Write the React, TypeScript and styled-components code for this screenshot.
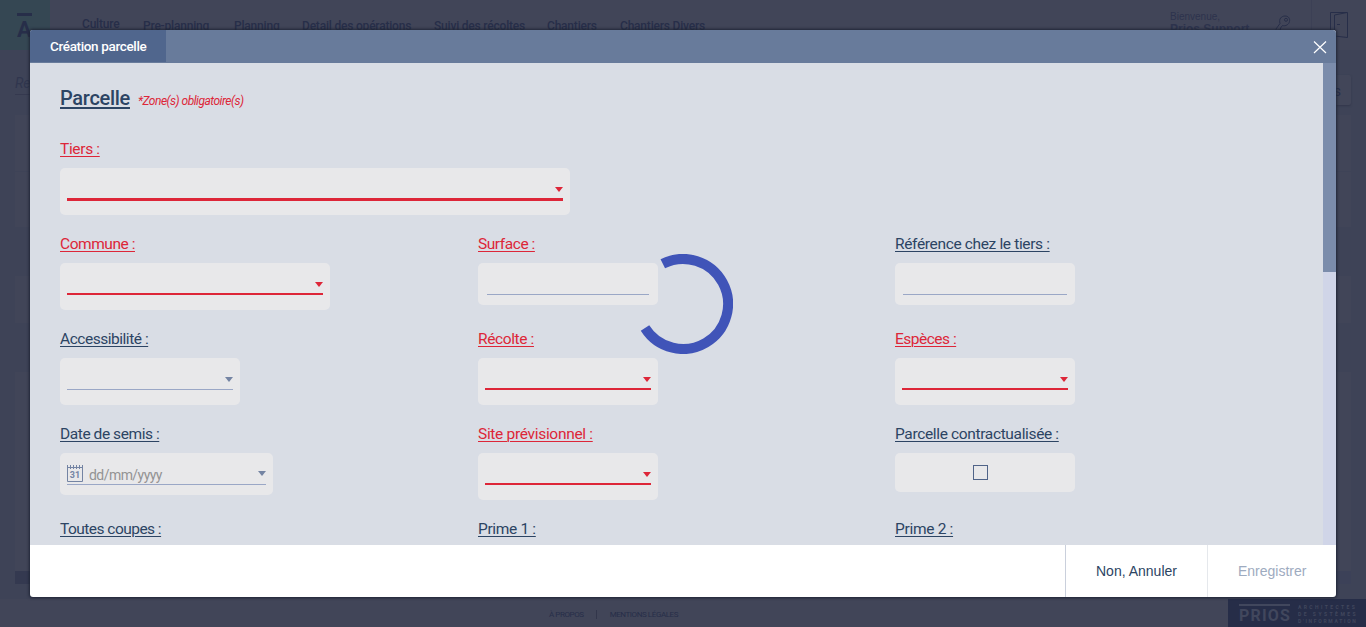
import React from 'react';
import styled, { createGlobalStyle } from 'styled-components';

const NAVY = '#2c4463';
const RED = '#dd2638';
const SLATE = '#7484a3';
const din = "Roboto, 'Liberation Sans', sans-serif";

const GlobalStyle = createGlobalStyle`
  * { box-sizing: border-box; }
  body { margin: 0; background: #3e4357; overflow: hidden; }
`;

const Page = styled.div`
  position: relative;
  width: 1366px;
  height: 627px;
  display: flex;
  flex-direction: column;
  background: #3e4357;
  font-family: ${din};
  color: #272e49;
`;

const TopBar = styled.header`
  display: flex;
  height: 50px;
  background: #414558;
`;
const Brand = styled.div`
  width: 50px;
  height: 50px;
  background: #354753;
  padding: 13px 0 0 17px;
`;
const Nav = styled.nav`
  flex: 1;
  display: flex;
  padding: 15px 0 0 32px;
`;
const NavItem = styled.span<{ $w: number; $active?: boolean }>`
  width: ${p => p.$w}px;
  flex: none;
  white-space: nowrap;
  font-size: 12px;
  font-weight: 500;
  line-height: 18px;
  letter-spacing: -0.2px;
  margin-top: ${p => (p.$active ? 0 : 2)}px;
`;
const Welcome = styled.div`
  width: 105px;
  padding-top: 10px;
  font: 10px/13px 'Liberation Sans', sans-serif;
  color: #2d334d;
  strong { display: block; font-size: 12px; }
`;
const KeySlot = styled.div`
  width: 36px;
  padding-top: 15px;
`;
const Exit = styled.div`
  width: 55px;
  border-left: 1px solid #3c4055;
  padding: 12px 0 0 18px;
`;

const Workspace = styled.main`
  flex: 1;
  position: relative;
  padding: 24px 15px 0;
  display: flex;
  flex-direction: column;
`;
const SearchLine = styled.div`
  display: flex;
  justify-content: space-between;
  height: 41px;
`;
const SearchHint = styled.div`
  width: 120px;
  height: 21px;
  border-bottom: 1px solid #35394f;
  font-size: 14px;
  line-height: 19px;
  font-style: italic;
  color: #30364e;
`;
const GhostButton = styled.div`
  width: 80px;
  height: 30px;
  margin-top: 1px;
  padding-right: 10px;
  border-radius: 2px;
  background: #424659;
  box-shadow: 0 1px 2px #33374b;
  text-align: right;
  font-size: 14px;
  line-height: 32px;
`;
const Panel = styled.div<{ $h: number; $gap: number; $fill?: string }>`
  height: ${p => p.$h}px;
  margin-bottom: ${p => p.$gap}px;
  background: ${p => p.$fill ?? '#414558'};
`;
const PagerStrip = styled.div`
  height: 13px;
  background: linear-gradient(90deg, #343950 50%, #3c4158 50%);
`;

const BottomBar = styled.footer`
  height: 28px;
  display: flex;
  background: #414558;
`;
const Legal = styled.div`
  flex: 1;
  display: flex;
  padding-left: 549px;
  align-items: center;
  font-size: 8px;
  letter-spacing: -0.42px;
  padding-top: 2px;
  span + span { margin-left: 12px; padding-left: 13px; border-left: 1px solid #32364b; }
`;
const Vendor = styled.div`
  width: 138px;
  display: flex;
  padding: 5px 0 0 11px;
  background: #262d48;
  color: #41475d;
`;
const VendorName = styled.div`
  width: 51px;
  height: 20px;
  margin-right: 8px;
  border-top: 2px solid #41475d;
  font-weight: 700;
  font-size: 16px;
  line-height: 20px;
  letter-spacing: 1.2px;
`;
const VendorTag = styled.div`
  font-weight: 700;
  font-size: 5px;
  line-height: 7px;
  white-space: nowrap;
`;
const TagLine = styled.div<{ $ls: number }>`
  letter-spacing: ${p => p.$ls}px;
`;

const Dialog = styled.section`
  position: absolute;
  left: 30px;
  top: 30px;
  width: 1306px;
  height: 567px;
  display: flex;
  flex-direction: column;
  border-radius: 3px;
  overflow: hidden;
  background: #fff;
  box-shadow: 0 0 3px 1px #1e2435;
`;
const DialogHeader = styled.div`
  height: 33px;
  flex: none;
  display: flex;
  justify-content: space-between;
  background: #687b9b;
`;
const DialogTab = styled.div`
  width: 136px;
  height: 32px;
  padding-left: 20px;
  background: #50668d;
  color: #fff;
  font-size: 13.5px;
  font-weight: 500;
  line-height: 33px;
  letter-spacing: -0.35px;
`;
const CloseButton = styled.div`
  width: 23px;
  padding-top: 11px;
  display: flex;
`;
const DialogBody = styled.div`
  height: 482px;
  flex: none;
  display: flex;
  overflow: hidden;
  background: #d9dde5;
`;
const Form = styled.div`
  flex: 1;
  padding-left: 30px;
`;
const Scrollbar = styled.div`
  width: 13px;
  background: #d0d5e8;
`;
const Thumb = styled.div`
  height: 209px;
  background: #7b8cab;
`;
const Heading = styled.div`
  height: 76px;
  display: flex;
  align-items: baseline;
  padding-top: 23px;
`;
const Title = styled.h2`
  margin: 0 8px 0 0;
  font-size: 20px;
  line-height: 25px;
  font-weight: 500;
  letter-spacing: -0.3px;
  color: ${NAVY};
  text-decoration: underline;
  text-decoration-thickness: 2px;
  text-underline-offset: 2px;
`;
const Note = styled.span`
  font-size: 12px;
  font-style: italic;
  letter-spacing: -0.5px;
  color: ${RED};
`;
const Row = styled.div`
  height: 95px;
  display: grid;
  grid-template-columns: 418px 417px 1fr;
`;
const Cell = styled.div``;
const Label = styled.div<{ $required?: boolean; $ls: number }>`
  height: 29px;
  font-size: 15.5px;
  line-height: 20px;
  letter-spacing: ${p => p.$ls}px;
  color: ${p => (p.$required ? RED : NAVY)};
  white-space: nowrap;
  text-decoration: underline;
  text-decoration-thickness: 1px;
  text-underline-offset: 2px;
`;
const Box = styled.div<{ $w: number; $h: number; $pad: number }>`
  width: ${p => p.$w}px;
  height: ${p => p.$h}px;
  padding: 0 ${p => p.$pad}px;
  border-radius: 5px;
  background: #e8e8ea;
`;
const Line = styled.div<{ $color: string; $weight: number; $arrowTop: number }>`
  height: ${p => (p.$weight === 3 ? 33 : 32)}px;
  display: flex;
  align-items: flex-start;
  border-bottom: ${p => p.$weight}px solid ${p => p.$color};
  > svg:last-child { margin-left: auto; margin-top: ${p => p.$arrowTop}px; }
`;
const CheckBoxArea = styled.div`
  width: 180px;
  height: 39px;
  display: flex;
  justify-content: center;
  padding-top: 12px;
  padding-right: 9px;
  border-radius: 5px;
  background: #e8e8ea;
`;
const Check = styled.div`
  width: 15px;
  height: 15px;
  border: 1px solid #4f6388;
`;
const DateIcon = styled.svg`
  margin-top: 12px;
  flex: none;
`;
const Placeholder = styled.span`
  margin: 13px 0 0 6px;
  font-size: 14px;
  line-height: 18px;
  letter-spacing: -0.55px;
  color: #939393;
`;
const DialogFooter = styled.div`
  height: 52px;
  flex: none;
  display: flex;
  justify-content: flex-end;
`;
const Action = styled.div<{ $w: number; $muted?: boolean }>`
  width: ${p => p.$w}px;
  padding-left: 30px;
  border-left: 1px solid ${p => (p.$muted ? '#e5e8ec' : '#cad0dc')};
  font: 14px/52px 'Liberation Sans', sans-serif;
  color: ${p => (p.$muted ? '#9eabc0' : NAVY)};
`;
const Spinner = styled.svg`
  position: absolute;
  left: 633px;
  top: 254px;
`;

const Arrow = ({ color }: { color: string }) => (
  <svg width="8" height="5" viewBox="0 0 8 5">
    <path d="M0 0h8L4 5z" fill={color} />
  </svg>
);

type FieldProps = { label: string; required?: boolean; ls: number; children?: React.ReactNode };
const Field = ({ label, required, ls, children }: FieldProps) => (
  <Cell>
    <Label $required={required} $ls={ls}>{label}</Label>
    {children}
  </Cell>
);

const Select = ({ width = 180, required, weight = 1 }: { width?: number; required?: boolean; weight?: number }) => (
  <Box $w={width} $h={47} $pad={7}>
    <Line $color={required ? RED : '#9aa7c6'} $weight={weight} $arrowTop={19}>
      <Arrow color={required ? RED : SLATE} />
    </Line>
  </Box>
);

const Input = ({ pad }: { pad: number }) => (
  <Box $w={180} $h={42} $pad={pad}>
    <Line $color="#9aa7c6" $weight={1} $arrowTop={0} />
  </Box>
);

const DateInput = () => (
  <Box $w={213} $h={42} $pad={7}>
    <Line $color="#9aa7c6" $weight={1} $arrowTop={18}>
      <DateIcon width="16" height="17" viewBox="0 0 16 17">
        <path d="M.5 0v16.5h15V0M0 2.5h16M3.5 0v4M6.5 0v4M9.5 0v4M12.5 0v4" fill="none" stroke={SLATE} />
        <text x="8" y="13" textAnchor="middle" fontSize="9" fontWeight="700" fill={SLATE}>31</text>
      </DateIcon>
      <Placeholder>dd/mm/yyyy</Placeholder>
      <Arrow color={SLATE} />
    </Line>
  </Box>
);

export default function App() {
  return (
    <Page>
      <GlobalStyle />
      <TopBar>
        <Brand>
          <svg width="18" height="28" viewBox="0 0 18 28">
            <path d="M0 0h15v3H0z" fill="#272e49" />
            <text x="0" y="24" fontSize="22" fontWeight="700" fill="#272e49">A</text>
          </svg>
        </Brand>
        <Nav>
          <NavItem $w={61} $active>Culture</NavItem>
          <NavItem $w={91}>Pre-planning</NavItem>
          <NavItem $w={68}>Planning</NavItem>
          <NavItem $w={132}>Detail des opérations</NavItem>
          <NavItem $w={113}>Suivi des récoltes</NavItem>
          <NavItem $w={73}>Chantiers</NavItem>
          <NavItem $w={90}>Chantiers Divers</NavItem>
        </Nav>
        <Welcome>Bienvenue,<strong>Prios Support</strong></Welcome>
        <KeySlot>
          <svg width="18" height="18" viewBox="0 0 18 18" fill="none" stroke="#272e49">
            <path d="M5 8.500C3.500 4 6.500 1 10 1s5 2.500 4.500 5.500-4 5-7 4L5.500 13v2h-2v2H1v-3z" />
            <circle cx="11" cy="4.800" r="1.500" />
          </svg>
        </KeySlot>
        <Exit>
          <svg width="19" height="26" viewBox="0 0 19 26" fill="none" stroke="#272e49">
            <path d="M4 24.500H.5V.5h17v25L4.500 24V3L17 .5M7 12.500h3" />
          </svg>
        </Exit>
      </TopBar>
      <Workspace>
        <SearchLine>
          <SearchHint>Rechercher</SearchHint>
          <GhostButton>Filtres</GhostButton>
        </SearchLine>
        <Panel $h={56} $gap={1} />
        <Panel $h={55} $gap={49} />
        <Panel $h={47} $gap={49} />
        <Panel $h={199} $gap={0} />
        <PagerStrip />
      </Workspace>
      <BottomBar>
        <Legal><span>À PROPOS</span><span>MENTIONS LÉGALES</span></Legal>
        <Vendor>
          <VendorName>PRIOS</VendorName>
          <VendorTag>
            <TagLine $ls={2.4}>ARCHITECTES</TagLine>
            <TagLine $ls={2.5}>DE SYSTÈMES</TagLine>
            <TagLine $ls={1.7}>D'INFORMATION</TagLine>
          </VendorTag>
        </Vendor>
      </BottomBar>

      <Dialog>
        <DialogHeader>
          <DialogTab>Création parcelle</DialogTab>
          <CloseButton>
            <svg width="14" height="13" viewBox="0 0 14 13">
              <path d="M1 .5l12 11.500M13 .5l-12 11.500" stroke="#fff" strokeWidth="1.2" />
            </svg>
          </CloseButton>
        </DialogHeader>
        <DialogBody>
          <Form>
            <Heading>
              <Title>Parcelle</Title>
              <Note>*Zone(s) obligatoire(s)</Note>
            </Heading>
            <Row>
              <Field label="Tiers :" ls={-0.33} required><Select width={510} required weight={3} /></Field>
            </Row>
            <Row>
              <Field label="Commune :" ls={-0.45} required><Select width={270} required weight={2} /></Field>
              <Field label="Surface :" ls={-0.44} required><Input pad={9} /></Field>
              <Field label="Référence chez le tiers :" ls={-0.35}><Input pad={8} /></Field>
            </Row>
            <Row>
              <Field label="Accessibilité :" ls={-0.47}><Select /></Field>
              <Field label="Récolte :" ls={-0.38} required><Select required weight={2} /></Field>
              <Field label="Espèces :" ls={-0.5} required><Select required weight={2} /></Field>
            </Row>
            <Row>
              <Field label="Date de semis :" ls={-0.43}><DateInput /></Field>
              <Field label="Site prévisionnel :" ls={-0.31} required><Select required weight={2} /></Field>
              <Field label="Parcelle contractualisée :" ls={-0.35}><CheckBoxArea><Check /></CheckBoxArea></Field>
            </Row>
            <Row>
              <Field label="Toutes coupes :" ls={-0.53} />
              <Field label="Prime 1 :" ls={-0.33} />
              <Field label="Prime 2 :" ls={-0.3} />
            </Row>
          </Form>
          <Scrollbar><Thumb /></Scrollbar>
        </DialogBody>
        <DialogFooter>
          <Action $w={142}>Non, Annuler</Action>
          <Action $w={129} $muted>Enregistrer</Action>
        </DialogFooter>
      </Dialog>

      <Spinner width="100" height="100" viewBox="0 0 100 100">
        <path d="M29.800 9.800A45 45 0 1 1 12 74" fill="none" stroke="#4054b8" strokeWidth="10" />
      </Spinner>
    </Page>
  );
}
